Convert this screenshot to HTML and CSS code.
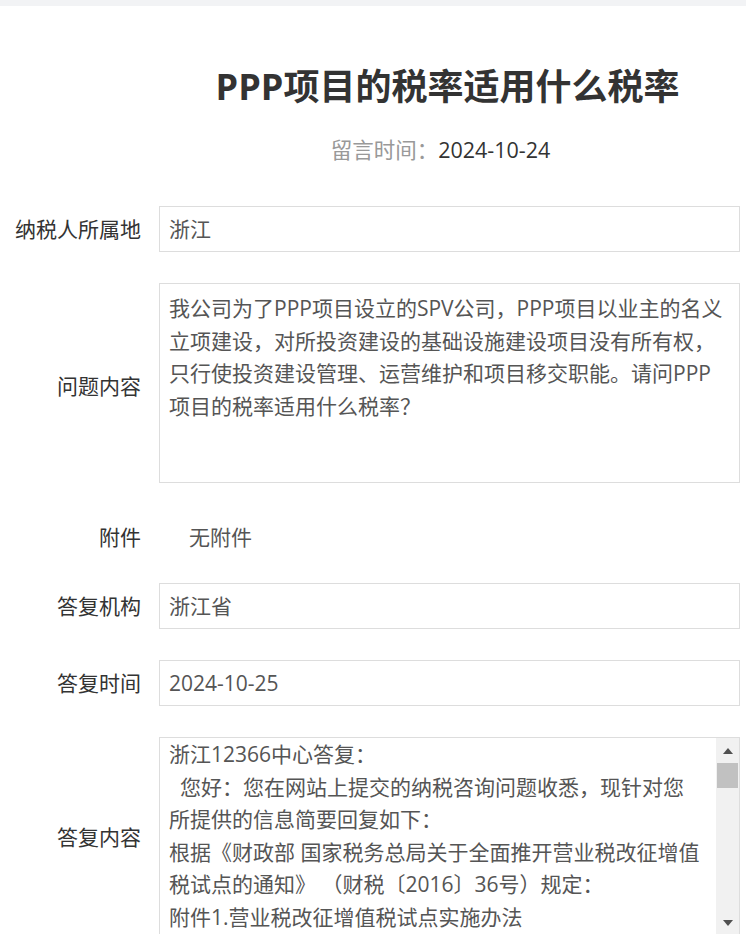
FILE: index.html
```html
<!DOCTYPE html>
<html lang="zh-CN">
<head>
<meta charset="utf-8">
<title>PPP项目的税率适用什么税率</title>
<link rel="stylesheet" href="styles.css">
</head>
<body>
<div class="topbar"></div>
<main class="page">
  <div class="head">
    <h1 class="title">PPP项目的税率适用什么税率</h1>
    <p class="meta"><span class="meta-label">留言时间：</span><span class="meta-value">2024-10-24</span></p>
  </div>

  <div class="row">
    <div class="label">纳税人所属地</div>
    <div class="field box input">浙江</div>
  </div>

  <div class="row row-area">
    <div class="label label-area">问题内容</div>
    <div class="field box area">我公司为了PPP项目设立的SPV公司，PPP项目以业主的名义<br>立项建设，对所投资建设的基础设施建设项目没有所有权，<br>只行使投资建设管理、运营维护和项目移交职能。请问PPP<br>项目的税率适用什么税率？</div>
  </div>

  <div class="row row-plain">
    <div class="label">附件</div>
    <div class="field plain">无附件</div>
  </div>

  <div class="row">
    <div class="label">答复机构</div>
    <div class="field box input">浙江省</div>
  </div>

  <div class="row">
    <div class="label">答复时间</div>
    <div class="field box input">2024-10-25</div>
  </div>

  <div class="row row-area">
    <div class="label">答复内容</div>
    <div class="field box answer">
      <div class="answer-text">浙江12366中心答复：<br>&nbsp;&nbsp;您好：您在网站上提交的纳税咨询问题收悉，现针对您<br>所提供的信息简要回复如下：<br>根据《财政部 国家税务总局关于全面推开营业税改征增值<br>税试点的通知》&nbsp;（财税〔2016〕36号）规定：<br>附件1.营业税改征增值税试点实施办法</div>
      <div class="scrollbar">
        <span class="arrow arrow-up"></span>
        <span class="thumb"></span>
        <span class="track"></span>
        <span class="arrow arrow-down"></span>
      </div>
    </div>
  </div>
</main>
</body>
</html>
```

FILE: styles.css
```css
html, body {
  margin: 0;
  padding: 0;
  background: #ffffff;
  overflow: hidden;
}

body {
  font-family: "Open Sans", "Noto Sans CJK SC", sans-serif;
  font-size: 21px;
  color: #333333;
}

.topbar {
  height: 6px;
  background: #f2f3f5;
}

.page {
  width: 740px;
}

.head {
  margin-left: 159px;
  width: 581px;
  text-align: center;
  padding-top: 56px;
  margin-bottom: 40px;
}

.title {
  margin: 0;
  font-size: 36px;
  line-height: 50px;
  font-weight: 700;
  color: #333333;
  padding-right: 4px;
}

.meta {
  margin: 22px 0 0 0;
  line-height: 32px;
  font-size: 21.5px;
  padding-right: 18px;
}

.meta-label {
  color: #999999;
}

.meta-value {
  color: #333333;
}

.row {
  display: flex;
  align-items: center;
  margin-bottom: 31px;
}

.label {
  width: 141px;
  flex: none;
  text-align: right;
  margin-right: 18px;
  color: #333333;
  line-height: 32px;
  white-space: nowrap;
}

.label-area {
  padding-top: 6px;
}

.field {
  width: 581px;
  flex: none;
  box-sizing: border-box;
  color: #555555;
}

.box {
  border: 1px solid #dddddd;
  background: #ffffff;
}

.input {
  height: 46px;
  line-height: 44px;
  padding: 0 9px;
}

.area {
  height: 200px;
  padding: 8px 9px;
  line-height: 32.5px;
  white-space: nowrap;
  overflow: hidden;
}

.row-plain {
  height: 46px;
  margin-bottom: 23px;
}

.plain {
  padding-left: 30px;
  line-height: 32px;
}

.answer {
  height: 200px;
  display: flex;
  overflow: hidden;
}

.answer-text {
  flex: 1;
  padding: 0 9px;
  line-height: 32.5px;
  white-space: nowrap;
  overflow: hidden;
}

.scrollbar {
  width: 23px;
  flex: none;
  background: #f1f1f1;
  display: flex;
  flex-direction: column;
  align-items: center;
}

.arrow {
  width: 0;
  height: 0;
  border-left: 5px solid transparent;
  border-right: 5px solid transparent;
  flex: none;
}

.arrow-up {
  margin-top: 10px;
  border-bottom: 6px solid #505050;
}

.arrow-down {
  margin-bottom: 10px;
  border-top: 6px solid #505050;
}

.thumb {
  width: 21px;
  height: 25px;
  margin-top: 9px;
  background: #c1c1c1;
  flex: none;
}

.track {
  flex: 1;
}
```
